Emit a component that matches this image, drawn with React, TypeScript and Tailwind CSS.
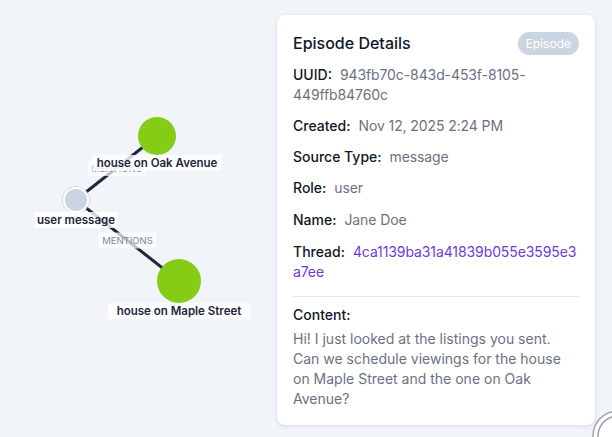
import React from "react";

const nodes = [
  { id: "user", label: "user message", x: 76, y: 200, r: 12, kind: "episode" },
  { id: "oak", label: "house on Oak Avenue", x: 157, y: 136, r: 19, kind: "entity" },
  { id: "maple", label: "house on Maple Street", x: 179, y: 281, r: 22, kind: "entity" },
];

const edges = [
  { from: "user", to: "oak", label: "MENTIONS" },
  { from: "user", to: "maple", label: "MENTIONS" },
];

const labelWidth = (text: string, px: number) => text.length * px;

function Graph() {
  const byId = Object.fromEntries(nodes.map((n) => [n.id, n]));
  return (
    <svg width="612" height="437" className="absolute inset-0">
      {edges.map((e, i) => {
        const a = byId[e.from];
        const b = byId[e.to];
        return (
          <line
            key={i}
            x1={a.x}
            y1={a.y}
            x2={b.x}
            y2={b.y}
            stroke="#1e293b"
            strokeWidth={3}
          />
        );
      })}
      {edges.map((e, i) => {
        const a = byId[e.from];
        const b = byId[e.to];
        const mx = (a.x + b.x) / 2;
        const my = (a.y + b.y) / 2;
        const w = labelWidth(e.label, 7.2);
        return (
          <g key={i}>
            <rect x={mx - w / 2} y={my - 8} width={w} height={16} fill="#ffffff" fillOpacity={0.7} />
            <text
              x={mx}
              y={my + 3.5}
              textAnchor="middle"
              fontSize={9.5}
              fill="#7c8aa0"
              fontFamily="Inter, 'Noto Sans', sans-serif"
            >
              {e.label}
            </text>
          </g>
        );
      })}
      {nodes.map((n) =>
        n.kind === "episode" ? (
          <g key={n.id}>
            <circle cx={n.x} cy={n.y} r={n.r + 1.5} fill="none" stroke="#cbd5e1" strokeWidth={1} />
            <circle cx={n.x} cy={n.y} r={n.r} fill="#cbd5e1" stroke="#ffffff" strokeWidth={2} />
          </g>
        ) : (
          <circle key={n.id} cx={n.x} cy={n.y} r={n.r} fill="#84cc16" />
        )
      )}
      {nodes.map((n) => {
        const cy = n.y + n.r + 8;
        const w = labelWidth(n.label, 6.6) + 4;
        return (
          <g key={n.id + "-label"}>
            <rect x={n.x - w / 2} y={cy - 8} width={w} height={16} fill="#ffffff" fillOpacity={0.8} />
            <text
              x={n.x}
              y={cy + 4}
              textAnchor="middle"
              fontSize={11.5}
              fontWeight={600}
              fill="#1e293b"
              fontFamily="Inter, 'Noto Sans', sans-serif"
            >
              {n.label}
            </text>
          </g>
        );
      })}
    </svg>
  );
}

function Row({ label, children, className = "mb-[11px]" }: { label: string; children: React.ReactNode; className?: string }) {
  return (
    <div className={`text-sm leading-5 ${className}`}>
      <span className="font-medium text-gray-900 mr-2">{label}</span>
      {children}
    </div>
  );
}

export default function App() {
  return (
    <div
      className="relative w-[612px] h-[437px] overflow-hidden bg-[#f1f4f9]"
      style={{ fontFamily: "Inter, 'Noto Sans', sans-serif" }}
    >
      <Graph />

      {/* Details panel */}
      <div className="absolute top-[15px] right-[17px] w-[318px] rounded-lg bg-white p-4 shadow-[0_1px_4px_rgba(15,23,42,0.12)]">
        <div className="flex items-center justify-between mb-2.5">
          <h2 className="text-base leading-6 font-medium text-gray-900">Episode Details</h2>
          <span className="rounded-full bg-slate-300 px-2 py-1 text-xs leading-[15px] text-white">Episode</span>
        </div>

        <Row label="UUID:">
          <span className="text-gray-500 tracking-[-0.1px]">943fb70c-843d-453f-8105-449ffb84760c</span>
        </Row>
        <Row label="Created:">
          <span className="text-gray-500 tracking-[-0.1px]">Nov 12, 2025 2:24 PM</span>
        </Row>
        <Row label="Source Type:">
          <span className="text-gray-500 tracking-[-0.1px]">message</span>
        </Row>
        <Row label="Role:" className="mb-3">
          <span className="text-gray-500 tracking-[-0.1px]">user</span>
        </Row>
        <Row label="Name:" className="mb-3">
          <span className="text-gray-500 tracking-[-0.1px]">Jane Doe</span>
        </Row>
        <Row label="Thread:" className="mb-3.5 break-all">
          <span className="text-[#6b3bd6] tracking-[-0.1px]">4ca1139ba31a41839b055e3595e3a7ee</span>
        </Row>

        <div className="border-t border-gray-200 pt-2">
          <div className="text-sm leading-5 font-medium text-gray-900">Content:</div>
          <p className="mt-1 text-sm leading-5 text-gray-500">
            Hi! I just looked at the listings you sent. Can we schedule viewings for the house on Maple Street and
            the one on Oak Avenue?
          </p>
        </div>
      </div>

      {/* corner control, mostly off-screen */}
      <svg width="40" height="40" className="absolute left-[592px] top-[406px]">
        <circle cx="26" cy="30" r="25" fill="#ffffff" stroke="#9ca3af" strokeWidth="1.5" />
        <circle cx="26" cy="30" r="20" fill="none" stroke="#9ca3af" strokeWidth="1.5" />
      </svg>
    </div>
  );
}
